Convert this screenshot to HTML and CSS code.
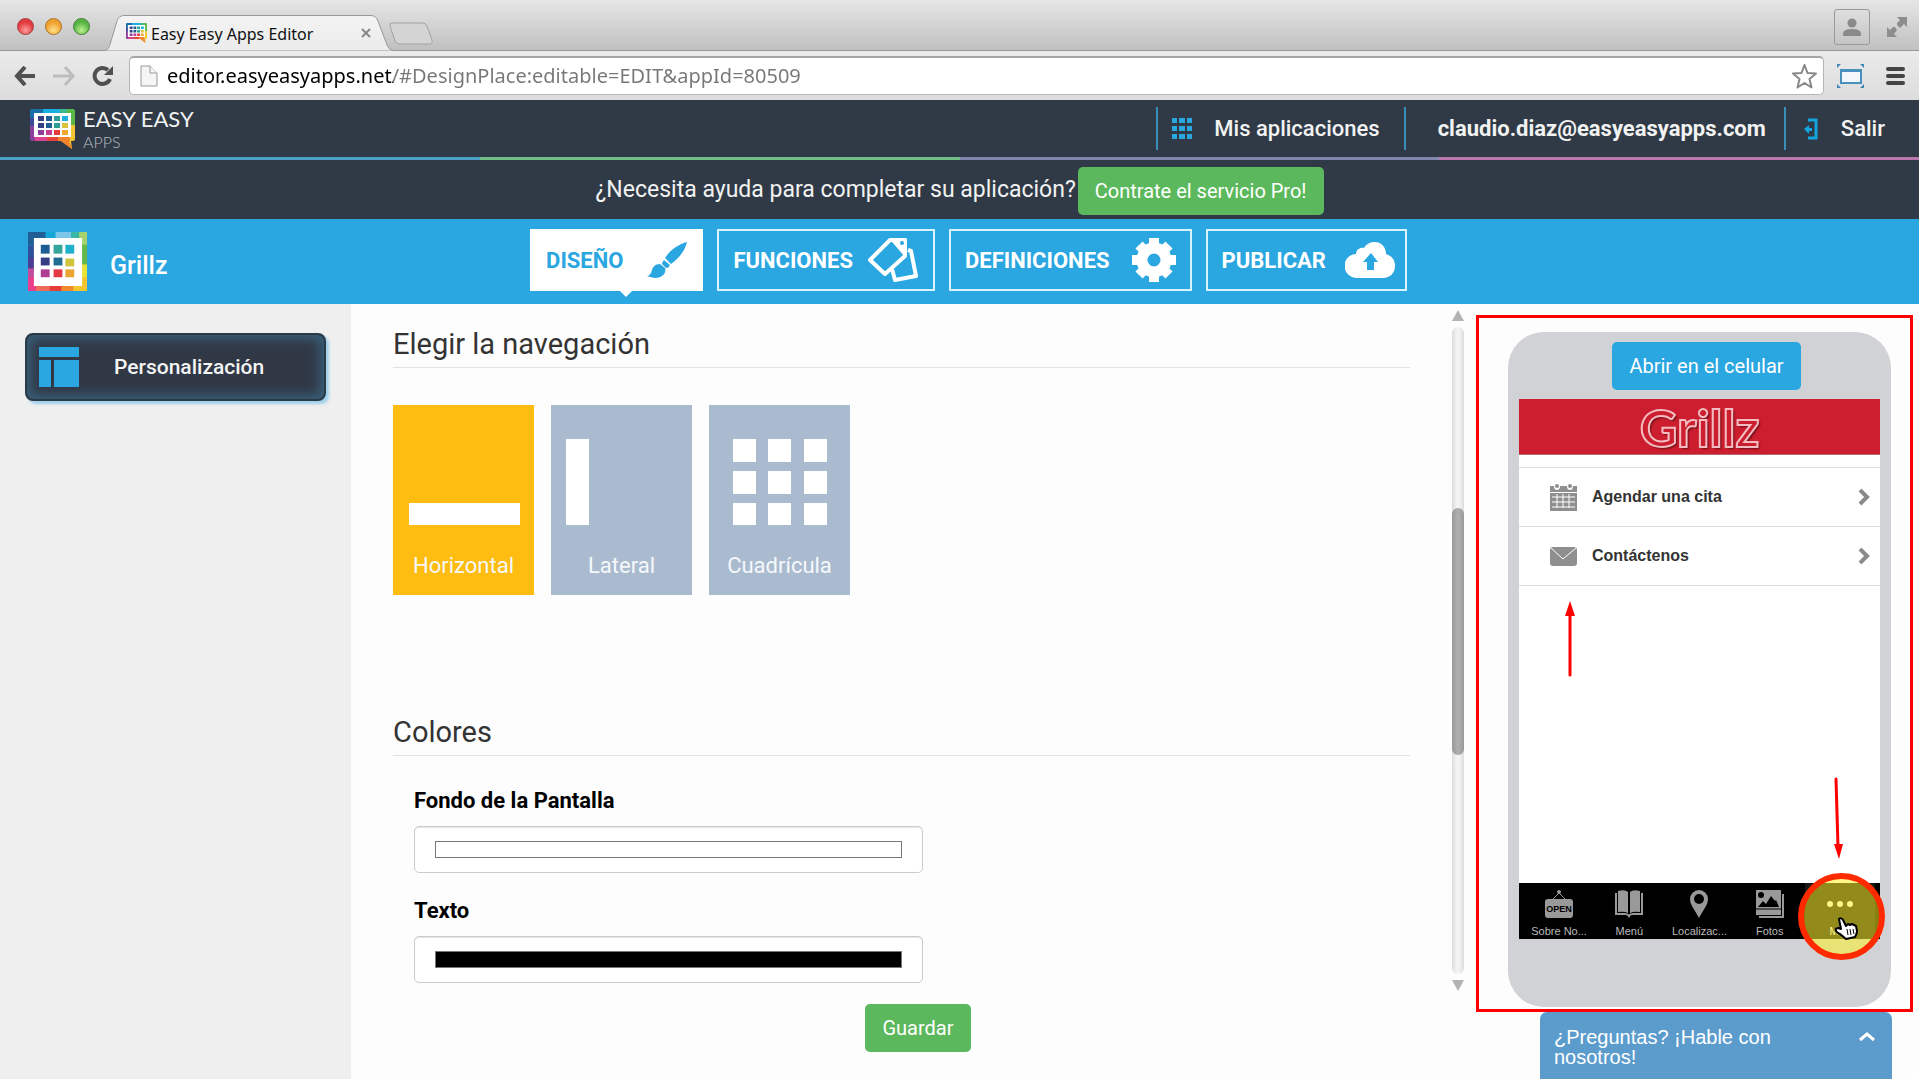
FILE: index.html
```html
<!DOCTYPE html>
<html lang="es">
<head>
<meta charset="utf-8">
<meta name="viewport" content="width=device-width, initial-scale=1">
<title>Easy Easy Apps Editor</title>
<link rel="stylesheet" href="styles.css">
</head>
<body>
<svg class="defs" aria-hidden="true">
  <defs>
    <linearGradient id="tabFill" x1="0" y1="0" x2="0" y2="1">
      <stop offset="0" stop-color="#f4f4f4"/><stop offset="1" stop-color="#ebebeb"/>
    </linearGradient>
    <symbol id="mosaic" viewBox="0 0 60 60" preserveAspectRatio="none">
      <path fill="#1f5f95" d="M0 0h18v14H0z"/><path fill="#17a6d8" d="M18 0h12v8H18z"/>
      <path fill="#7cc6ea" d="M28 0h16v8H28z"/><path fill="#3bb8a5" d="M44 0h8v12h-8z"/>
      <path fill="#a5d26c" d="M52 0h8v14h-8z"/><path fill="#2e4f9b" d="M0 14h8v14H0z"/>
      <path fill="#4a3d93" d="M0 26h8v12H0z"/><path fill="#c04a9b" d="M0 37h8v10H0z"/>
      <path fill="#e83e8c" d="M0 46h14v14H0z"/><path fill="#ef6a5a" d="M8 54h16v6H8z"/>
      <path fill="#e53c36" d="M22 53h14v7H22z"/><path fill="#f08a2c" d="M34 53h14v7H34z"/>
      <path fill="#f5c42e" d="M46 44h14v16H46z"/><path fill="#e8e337" d="M53 32h7v14h-7z"/>
      <path fill="#63b94a" d="M53 13h7v20h-7z"/><path fill="#fff" d="M6 6h49v49H6z"/>
      <path fill="#1c5d93" d="M13 13h9v9h-9z"/><path fill="#35a59a" d="M26 13h9v9h-9z"/>
      <path fill="#1fb1cc" d="M38 13h9v9h-9z"/><path fill="#353d84" d="M13 26h9v8h-9z"/>
      <path fill="#1e6e93" d="M26 26h9v8h-9z"/><path fill="#cfc43c" d="M38 27h9v8h-9z"/>
      <path fill="#b03c93" d="M13 38h9v8h-9z"/><path fill="#e33a44" d="M26 38h9v8h-9z"/>
      <path fill="#e8a52f" d="M38 38h9v8h-9z"/>
    </symbol>
    <symbol id="bubble" viewBox="0 0 45 40" preserveAspectRatio="none">
      <path fill="#1b6fa8" d="M0 2q0-2 2-2h14v12H0z"/><path fill="#18aee0" d="M13 0h18v8H13z"/>
      <path fill="#3fb78c" d="M30 0h8v12h-8z"/><path fill="#5bb848" d="M37 0h6q2 0 2 2v15h-8z"/>
      <path fill="#3c4a9b" d="M0 9h8v10H0z"/><path fill="#8a3f99" d="M0 17h8v13q0 2-2 2H2q-2 0-2-2z"/>
      <path fill="#d9438f" d="M5 25h14v7H5z"/><path fill="#e9423c" d="M17 25h12v7H17z"/>
      <path fill="#f0832c" d="M28 25h12v7H28z"/><path fill="#f3c52f" d="M38 16h7v14q0 2-2 2h-2l1 8-11-8h9z"/>
      <path fill="#f0832c" d="M31 32h8l3 8z"/><path fill="#fff" d="M4 4h37v24H4z"/>
      <path fill="#353f86" d="M8 7h6v5H8zM8 14h6v5H8z"/><path fill="#1f5f95" d="M16 7h6v5h-6zM16 14h6v5h-6z"/>
      <path fill="#2d9f98" d="M24 7h6v5h-6zM24 14h6v5h-6z"/><path fill="#1fb1dc" d="M32 7h6v5h-6z"/>
      <path fill="#d9c43c" d="M32 14h6v5h-6z"/><path fill="#8a3f99" d="M8 21h6v5H8z"/>
      <path fill="#c43c93" d="M16 21h6v5h-6z"/><path fill="#e33a3a" d="M24 21h6v5h-6z"/>
      <path fill="#f0a52f" d="M32 21h6v5h-6z"/>
    </symbol>
  </defs>
</svg>

<div class="browser">
  <div class="tabstrip">
    <div class="lights"><span class="light red"></span><span class="light amber"></span><span class="light green"></span></div>
    <div class="tab">
      <svg class="tab-shape" viewBox="0 0 290 36" aria-hidden="true"><path d="M0 35.500c4 0 5-3 6-6L13 6q2-5.500 7-5.500H267q5 0 7 5.500l9 24q2 5 6 5.500" fill="url(#tabFill)" stroke="#999"/></svg>
      <svg class="favicon" aria-hidden="true"><use href="#bubble"/></svg>
      <span class="tab-title">Easy Easy Apps Editor</span>
      <button class="bare tab-close" aria-label="Cerrar pestaña"><svg width="10" height="10" viewBox="0 0 10 10"><path d="M1 1l8 8M9 1L1 9" stroke="#888" stroke-width="2"/></svg></button>
    </div>
    <button class="bare new-tab" aria-label="Nueva pestaña"><svg width="46" height="24" viewBox="0 0 46 24"><path d="M4 1h30q4 0 5 3l5 14q1 4-3 4H12q-4 0-5-3L2 4q-1-3 2-3z" fill="#d4d4d4" stroke="#a2a2a2"/></svg></button>
    <button class="profile" aria-label="Perfil"><svg width="18" height="18" viewBox="0 0 18 18" fill="#8a8a8a"><circle cx="9" cy="5" r="4.500"/><path d="M0 18v-2q0-5 9-5t9 5v2z"/></svg></button>
    <button class="bare" aria-label="Pantalla completa"><svg width="20" height="20" viewBox="0 0 20 20" fill="#8d8d8d"><path d="M10 0h10v10l-3-3-4 4-3-3V6l3-3zM0 20V10l3 3 3-3 2 0 2 3-3 4 3 3z"/></svg></button>
  </div>
  <div class="toolbar">
    <button class="bare" aria-label="Atrás"><svg width="22" height="20" viewBox="0 0 22 20" fill="none" stroke="#505050" stroke-width="4"><path d="M2 10h19M11 1l-8 9 8 9"/></svg></button>
    <button class="bare" aria-label="Adelante"><svg width="22" height="20" viewBox="0 0 22 20" fill="none" stroke="#bdbdbd" stroke-width="3"><path d="M0 10h19M12 1l8 9-8 9"/></svg></button>
    <button class="bare" aria-label="Recargar"><svg width="22" height="22" viewBox="0 0 22 22"><path d="M18 14a8 8 0 1 1-2-9" fill="none" stroke="#505050" stroke-width="4"/><path d="M21 1v9h-9z" fill="#505050"/></svg></button>
    <div class="omnibox">
      <svg width="18" height="22" viewBox="0 0 18 22" fill="#f5f5f5" stroke="#999"><path d="M1 1h9l7 7v13H1z"/><path d="M10 1v7h7"/></svg>
      <input class="url" type="text" aria-label="Dirección" value="editor.easyeasyapps.net/#DesignPlace:editable=EDIT&amp;appId=80509">
      <button class="bare" aria-label="Favorito"><svg width="25" height="25" viewBox="0 0 25 25"><path d="M12.500 1l3 8 8.500.5-6.500 5.500 2 8.500-7-4.500-7 4.500 2-8.500L1 9.500 9.500 9z" fill="#fff" stroke="#888" stroke-width="2" stroke-linejoin="round"/></svg></button>
    </div>
    <button class="bare" aria-label="Captura"><svg width="27" height="24" viewBox="0 0 27 24"><path d="M4 6h20v13H4z" fill="#f3f6fa" stroke="#4a90bd" stroke-width="2"/><path d="M3 5h22v3H3z" fill="#4a90bd"/><path d="M0 0h4L0 4zM27 0v4l-4-4zM0 24v-4l4 4zM27 24h-4l4-4z" fill="#3f87b6"/></svg></button>
    <button class="bare menu" aria-label="Menú"><svg width="19" height="18" viewBox="0 0 19 18" fill="#444"><rect width="19" height="4" rx="2"/><rect y="7" width="19" height="4" rx="2"/><rect y="14" width="19" height="4" rx="2"/></svg></button>
  </div>
</div>

<header class="site-header">
  <a class="brand" href="#">
    <svg width="45" height="40" aria-hidden="true"><use href="#bubble"/></svg>
    <span class="brand-text"><span class="brand-main">EASY EASY</span><span class="brand-sub">APPS</span></span>
  </a>
  <nav class="account">
    <a href="#" class="account-link apps"><svg width="20" height="21" viewBox="0 0 20 21" fill="#2aa6e1"><path d="M0 0h5v5H0zM7 0h6v5H7zM15 0h5v5h-5zM0 8h5v5H0zM7 8h6v5H7zM15 8h5v5h-5zM0 16h5v5H0zM7 16h6v5H7zM15 16h5v5h-5z"/></svg>Mis aplicaciones</a>
    <a href="#" class="account-link user">claudio.diaz@easyeasyapps.com</a>
    <a href="#" class="account-link exit"><svg width="14" height="22" viewBox="0 0 14 22"><path d="M4 2h8v18H4" fill="none" stroke="#12a5df" stroke-width="3"/><path d="M0 11l5-4v3h3v3H5v3z" fill="#12a5df"/></svg>Salir</a>
  </nav>
</header>
<div class="rainbow"><span class="r-blue"></span><span class="r-green"></span><span class="r-violet"></span><span class="r-pink"></span></div>

<div class="promo"><span>¿Necesita ayuda para completar su aplicación?</span><button class="btn green-btn">Contrate el servicio Pro!</button></div>

<div class="app-nav">
  <div class="app-name">
    <svg width="59" height="59" aria-hidden="true"><use href="#mosaic"/></svg>
    <span>Grillz</span>
  </div>
  <nav class="steps">
    <a href="#" class="step active">DISEÑO<svg class="i-brush" width="40" height="36" viewBox="0 0 40 36" fill="#2aa6e1"><path d="M40 0c-8 2-17 8-22 16l6 6C32 16 38 9 40 0zM17 18c-1 1-2 3-2 4l4 4c2 0 3-1 4-3zM13 22c-5 0-7 3-8 6-1 4-3 6-5 6 5 2 11 3 15 0 3-2 4-5 3-8z"/></svg></a>
    <a href="#" class="step">FUNCIONES<svg class="i-tags" width="51" height="44" viewBox="0 0 51 44" fill="none" stroke="#fff" stroke-width="4" stroke-linejoin="round"><path d="M22 2L37 2v16L17 36 2 22z"/><path d="M25 2h12v14z" fill="#fff"/><circle cx="34" cy="5" r="2" fill="#2aa6e1" stroke="none"/><path d="M40 12l3 1 5 25-21 4-3-11"/></svg></a>
    <a href="#" class="step">DEFINICIONES<svg class="i-gear" width="44" height="44" viewBox="0 0 44 44" fill="none" stroke="#fff"><circle cx="22" cy="22" r="12" stroke-width="11"/><path d="M22 0v8M22 36v8M0 22h8M36 22h8M7 7l6 6M31 31l6 6M37 7l-6 6M13 31l-6 6" stroke-width="10"/></svg></a>
    <a href="#" class="step">PUBLICAR<svg class="i-cloud" width="50" height="36" viewBox="0 0 50 36"><path fill="#fff" d="M12 36A12 12 0 0 1 11 12C11 7 16 5 19 6 22 1 26 0 30 0c7 0 11 6 11 12 6 2 9 6 9 12 0 7-5 12-12 12z"/><path fill="#2aa6e1" d="M26 11l7 9h-4v8h-7v-8h-4z"/></svg></a>
  </nav>
</div>

<div class="workspace">
  <aside class="sidebar">
    <button class="side-item"><svg width="40" height="40" viewBox="0 0 40 40" fill="#2aa6e1"><path d="M0 0h40v10H0zM0 13h12v27H0zM15 13h25v27H15z"/></svg>Personalización</button>
  </aside>

  <main class="editor">
    <section>
      <h2>Elegir la navegación</h2>
      <div class="choices">
        <button class="choice selected"><svg width="141" height="190" viewBox="0 0 141 190" fill="#fff"><path d="M16 98h111v22H16z"/></svg><span>Horizontal</span></button>
        <button class="choice"><svg width="141" height="190" viewBox="0 0 141 190" fill="#fff"><path d="M15 34h23v86H15z"/></svg><span>Lateral</span></button>
        <button class="choice"><svg width="141" height="190" viewBox="0 0 141 190" fill="#fff"><path d="M24 34h23v23H24zM59 34h23v23H59zM95 34h23v23H95zM24 66h23v23H24zM59 66h23v23H59zM95 66h23v23H95zM24 98h23v22H24zM59 98h23v22H59zM95 98h23v22H95z"/></svg><span>Cuadrícula</span></button>
      </div>
    </section>
    <section>
      <h2>Colores</h2>
      <form class="colors">
        <label for="bg">Fondo de la Pantalla</label>
        <input type="color" id="bg" value="#ffffff">
        <label for="fg">Texto</label>
        <input type="color" id="fg" value="#000000">
      </form>
    </section>
    <div class="actions"><button class="btn green-btn save">Guardar</button></div>
  </main>

  <div class="scroller" aria-hidden="true">
    <span class="up"></span><div class="track"><div class="thumb"></div></div><span class="down"></span>
  </div>

  <aside class="preview">
    <div class="phone">
      <button class="btn blue-btn">Abrir en el celular</button>
      <div class="screen">
        <div class="phone-head">Grillz</div>
        <ul class="list">
          <li><a href="#"><svg width="27" height="27" viewBox="0 0 27 27" fill="#8f8f8f"><path d="M0 2h4q0 4 3 4t3-4h7q0 4 3 4t3-4h4v6H0z"/><circle cx="7" cy="2" r="2"/><circle cx="20" cy="2" r="2"/><path d="M0 9h27v18H0z"/><path d="M2 13h23M2 18h23M2 23h23M7 10v14M13 10v14M19 10v14" stroke="#fff"/></svg><span>Agendar una cita</span><svg width="12" height="18" viewBox="0 0 12 18"><path d="M2 2l7 7-7 7" fill="none" stroke="#8a8a8a" stroke-width="4"/></svg></a></li>
          <li><a href="#"><svg width="27" height="27" viewBox="0 0 27 27"><rect y="4" width="27" height="19" rx="3" fill="#8f8f8f"/><path d="M1 5l12 11L26 5" fill="none" stroke="#fff"/></svg><span>Contáctenos</span><svg width="12" height="18" viewBox="0 0 12 18"><path d="M2 2l7 7-7 7" fill="none" stroke="#8a8a8a" stroke-width="4"/></svg></a></li>
        </ul>
        <nav class="phone-tabs">
          <a href="#"><svg width="28" height="28" viewBox="0 0 28 28"><path d="M8 9l6-6 6 6" fill="none" stroke="#999"/><circle cx="14" cy="2" r="2" fill="#999"/><rect y="9" width="28" height="19" rx="3" fill="#999"/><text x="14" y="22" text-anchor="middle" class="open-sign">OPEN</text></svg>Sobre No...</a>
          <a href="#"><svg width="28" height="28" viewBox="0 0 28 28"><path d="M3 1q7-2 10 1v21q-4-2-10-1zM25 1q-7-2-10 1v21q4-2 10-1z" fill="#999"/><path d="M1 3v21h9q3 0 4 2 1-2 4-2h9V3" fill="none" stroke="#999" stroke-width="2"/></svg>Menú</a>
          <a href="#"><svg width="28" height="28" viewBox="0 0 28 28"><path d="M14 28C10 20 5 15 5 9a9 9 0 0 1 18 0c0 6-5 11-9 19zM14 4a5 5 0 1 0 0 10 5 5 0 0 0 0-10z" fill="#999" fill-rule="evenodd"/></svg>Localizac...</a>
          <a href="#"><svg width="28" height="28" viewBox="0 0 28 28"><path d="M0 0h25v25H0z" fill="#999"/><path d="M2 17l5-6 3 3 5-8 4 5 1-1 3 7z"/><circle cx="5" cy="5" r="3"/><path d="M0 19h25" stroke="#000"/><path d="M3 27h24V4" fill="none" stroke="#999" stroke-width="2"/></svg>Fotos</a>
          <a href="#" class="current"><svg width="28" height="28" viewBox="0 0 28 28" fill="#fff"><circle cx="4" cy="14" r="3"/><circle cx="14" cy="14" r="3"/><circle cx="24" cy="14" r="3"/></svg>Más</a>
        </nav>
      </div>
    </div>
    <svg class="mark arrow-up" width="10" height="76" viewBox="0 0 10 76"><path d="M5 74V10" stroke="#f00" stroke-width="3" stroke-linecap="round"/><path d="M5 0l5 15H0z" fill="#f00"/></svg>
    <svg class="mark arrow-down" width="12" height="82" viewBox="0 0 12 82"><path d="M4 2l2 68" stroke="#f00" stroke-width="3" stroke-linecap="round"/><path d="M7 82L2 67h9z" fill="#f00"/></svg>
    <div class="mark ring"></div>
    <svg class="mark hand" width="24" height="24" viewBox="0 0 24 24"><path d="M5 2c1-1 3-1 4 1l3 6 2-2 2 1 2-1 2 1 2 1 1 5c0 3-1 4-2 6l-9 2c-3-2-5-5-8-6-3-2-3-5 0-5l3 1z" fill="#fff" stroke="#000" stroke-width="2" stroke-linejoin="round"/><path d="M13 12l1 6M16 12l1 6M19 12l1 5" stroke="#000"/></svg>
  </aside>
</div>

<button class="chat"><span>¿Preguntas? ¡Hable con nosotros!</span><svg width="16" height="10" viewBox="0 0 16 10"><path d="M1 8l7-6 7 6" fill="none" stroke="#fff" stroke-width="3"/></svg></button>
</body>
</html>
```

FILE: styles.css
```css
* { box-sizing: border-box; }
body {
  margin: 0;
  min-height: 100vh;
  display: flex;
  flex-direction: column;
  background: #fdfdfd;
  font-family: Roboto, "Liberation Sans", sans-serif;
  font-size: 22px;
  color: #333;
}
a { color: inherit; text-decoration: none; }
button { font: inherit; cursor: pointer; }
svg { display: block; flex: none; }
.defs { position: absolute; width: 0; height: 0; }
.bare { border: 0; padding: 0; background: none; }

/* Browser frame */
.browser { font-family: "Noto Sans", "Open Sans", sans-serif; }
.tabstrip {
  height: 51px;
  display: flex;
  align-items: center;
  padding: 3px 12px 0 17px;
  background: linear-gradient(#e6e6e6, #c0c0c0);
  border-bottom: 1px solid #999;
}
.lights { display: flex; gap: 11px; }
.light { width: 17px; height: 17px; border-radius: 50%; border: 1px solid; }
.light.red { background: radial-gradient(circle at 50% 75%, #ff9c9c, #e23b3f 60%); border-color: #a8393c; }
.light.amber { background: radial-gradient(circle at 50% 75%, #ffe08a, #f0a02e 60%); border-color: #a87228; }
.light.green { background: radial-gradient(circle at 50% 75%, #bdf28c, #57b344 60%); border-color: #46803a; }
.tab {
  position: relative;
  align-self: flex-end;
  width: 290px;
  height: 35px;
  margin-left: 14px;
  padding: 0 23px 0 22px;
  display: flex;
  align-items: center;
  gap: 4px;
}
.tab > * { position: relative; }
.tab .tab-shape { position: absolute; left: 0; top: 0; width: 290px; height: 36px; }
.favicon { width: 21px; height: 20px; }
.tab-title { flex: 1; padding-top: 2px; font-size: 16px; color: #111; white-space: nowrap; }
.new-tab { align-self: flex-end; margin: 0 auto 4px -6px; }
.profile {
  width: 36px;
  height: 36px;
  display: grid;
  place-items: center;
  margin-right: 17px;
  padding: 0;
  border: 1px solid #999;
  border-radius: 3px;
  background: none;
}
.toolbar {
  height: 49px;
  display: flex;
  align-items: center;
  gap: 17px;
  padding: 0 14px;
  background: linear-gradient(#ebebeb, #dcdcdc);
}
.omnibox {
  flex: 1;
  height: 39px;
  display: flex;
  align-items: center;
  gap: 9px;
  margin: 0 -4px 0 -2px;
  padding: 0 6px 0 10px;
  background: #fff;
  border: 1px solid #b5b5b5;
  border-top: 2px solid #a5a5a5;
  border-radius: 5px;
}
.menu { margin-left: 5px; }
.url {
  flex: 1;
  min-width: 0;
  height: 30px;
  border: 0;
  padding: 0 0 2px;
  font: 20px "Noto Sans", "Open Sans", sans-serif;
  color: #000;
  background: linear-gradient(90deg, #000 226px, #777 226px);
  background-clip: text;
  -webkit-text-fill-color: transparent;
}

/* Site header */
.site-header {
  height: 57px;
  display: flex;
  align-items: center;
  justify-content: space-between;
  padding: 0 34px 0 30px;
  background: #2f3a46;
  color: #f2f2f2;
}
.brand { display: flex; align-items: center; gap: 8px; font-family: Lato, sans-serif; }
.brand-text { display: flex; flex-direction: column; }
.brand-main { font-size: 22px; line-height: 27px; }
.brand-sub { font-size: 16px; line-height: 20px; font-weight: 300; color: #b5bac0; }
.account { display: flex; }
.account-link {
  display: flex;
  align-items: center;
  height: 43px;
  border-left: 2px solid #3a8fb8;
  font-weight: 500;
}
.apps { padding: 0 24px 0 14px; gap: 22px; }
.user { padding: 0 18px 0 32px; font-weight: 700; }
.exit { padding-left: 18px; gap: 23px; }
.rainbow { display: grid; grid-template-columns: repeat(4, 1fr); height: 3px; }
.r-blue { background: #4b9fc4; }
.r-green { background: #71bd86; }
.r-violet { background: #8285ad; }
.r-pink { background: #b978ae; }

.promo {
  height: 59px;
  display: flex;
  align-items: center;
  justify-content: center;
  gap: 2px;
  padding-top: 3px;
  background: #2f3a46;
  color: #f2f2f2;
}
.promo span { padding-bottom: 4px; font-size: 23px; }
.btn {
  height: 48px;
  padding: 0 17px;
  border: 0;
  border-radius: 5px;
  font-size: 20px;
  color: #fff;
}
.green-btn { background: #5cb85c; }
.blue-btn { background: #2aa6e1; }

/* App navigation */
.app-nav {
  height: 85px;
  display: flex;
  align-items: center;
  background: #2aa6e1;
  color: #fff;
}
.app-nav::after { content: ""; flex: 1 1 10px; }
.app-name {
  flex: 1;
  display: flex;
  align-items: center;
  gap: 23px;
  padding-left: 28px;
  font-size: 25px;
  font-weight: 500;
}
.app-name span { padding-top: 8px; }
.steps { display: flex; gap: 14px; padding-bottom: 3px; }
.step {
  position: relative;
  display: flex;
  align-items: center;
  height: 62px;
  padding: 0 14px;
  border: 2px solid #d8f3ff;
  font-weight: 700;
}
.step.active { background: #fff; color: #2aa6e1; border-color: #fff; }
.step.active::after {
  content: "";
  position: absolute;
  left: 88px;
  top: 60px;
  border: 6px solid transparent;
  border-top-color: #fff;
  border-bottom: 0;
}
.i-brush { margin-left: 24px; }
.i-tags { margin-left: 15px; }
.i-gear { margin-left: 22px; }
.i-cloud { margin: 0 -4px 0 19px; }

/* Workspace */
.workspace { flex: 1; display: flex; }
.sidebar { width: 351px; padding: 29px 25px; background: #efefef; }
.side-item {
  width: 100%;
  height: 68px;
  display: flex;
  align-items: center;
  gap: 35px;
  padding: 0 12px;
  border: 2px solid #2b3a48;
  border-radius: 8px;
  background: #303846;
  box-shadow: inset 0 0 12px 4px #39607a, 3px 3px 3px #9fd0ea;
  color: #f4f4f4;
  font-size: 21px;
  font-weight: 500;
}
.editor { flex: 1; min-width: 0; padding: 21px 42px 0; }
h2 {
  margin: 0;
  padding-bottom: 4px;
  border-bottom: 1px solid #e3e3e3;
  font-size: 29px;
  line-height: 38px;
  font-weight: 400;
}
.choices { display: flex; gap: 17px; margin: 37px 0 118px; }
.choice {
  width: 141px;
  height: 190px;
  display: grid;
  padding: 0;
  border: 0;
  background: #abbbcf;
  color: #f5f8fb;
}
.choice > * { grid-area: 1 / 1; }
.choice span { align-self: end; padding-bottom: 17px; }
.choice.selected { background: #ffbc11; }
.colors { width: 50%; margin: 31px 21px 0; display: flex; flex-direction: column; }
.colors label { margin-bottom: 11px; line-height: 28px; font-weight: 700; color: #000; }
.colors input {
  width: 100%;
  height: 47px;
  margin: 0 0 24px;
  padding: 14px 20px;
  border: 1px solid #ccc;
  border-radius: 5px;
  background: #fff;
  box-shadow: inset 0 1px 1px #e4e4e4;
}
.colors input:last-child { margin-bottom: 21px; }
.colors input::-webkit-color-swatch-wrapper { padding: 0; }
.colors input::-webkit-color-swatch { border: 1px solid #777; border-radius: 0; }
.actions { display: flex; justify-content: center; padding-left: 33px; }

.scroller {
  width: 12px;
  margin: 6px 12px 0 0;
  display: flex;
  flex-direction: column;
  gap: 6px;
}
.up, .down { border: 6px solid transparent; border-top-width: 0; border-bottom: 11px solid #b3b3b3; }
.down { border-top: 11px solid #b3b3b3; border-bottom-width: 0; }
.track { height: 647px; padding-top: 181px; border-radius: 6px; background: linear-gradient(90deg, #dcdcdc, #f3f3f3 40%, #f3f3f3 60%, #dcdcdc); }
.thumb { height: 247px; border-radius: 6px; background: linear-gradient(90deg, #999, #b0b0b0 50%, #999); }

/* Phone preview */
.preview {
  position: relative;
  align-self: flex-start;
  width: 437px;
  margin: 11px 6px 0 0;
  padding: 14px 19px 2px 29px;
  border: 3px solid #f00;
}
.phone {
  display: flex;
  flex-direction: column;
  align-items: center;
  padding: 10px 11px 68px;
  border-radius: 36px;
  background: #d1d2d5;
}
.blue-btn { margin: 0 0 9px 14px; }
.screen { width: 100%; height: 540px; display: flex; flex-direction: column; background: #fff; font-family: "Liberation Sans", sans-serif; }
.phone-head {
  height: 56px;
  border-bottom: 1px solid #b06a70;
  background: #cc1e2e;
  color: #cc1e2e;
  font-family: Lato, sans-serif;
  font-size: 52px;
  line-height: 56px;
  font-weight: 700;
  text-align: center;
  -webkit-text-stroke: 2px #f3bcc1;
  text-shadow: 2px 2px 2px #701018;
}
.list { flex: 1; margin: 12px 0 0; padding: 0; list-style: none; }
.list li { border-bottom: 1px solid #ddd; }
.list li:first-child { border-top: 1px solid #ddd; }
.list a { display: flex; align-items: center; gap: 15px; height: 58px; padding: 0 10px 0 31px; font-size: 16px; font-weight: 700; }
.list span { flex: 1; }
.phone-tabs { display: grid; grid-template-columns: repeat(5, 1fr); height: 56px; padding: 0 5px; background: #000; }
.phone-tabs a { display: flex; flex-direction: column; align-items: center; gap: 6px; padding-top: 7px; font-size: 11px; line-height: 14px; color: #bbb; }
.phone-tabs .current { color: #fff; background: #181818; }
.open-sign { font: 700 9px "Liberation Sans", sans-serif; fill: #000; }

/* Marks drawn over the preview */
.mark { position: absolute; }
.arrow-up { left: 86px; top: 283px; }
.arrow-down { left: 353px; top: 459px; }
.ring { left: 319px; top: 555px; width: 87px; height: 87px; border: 6px solid #ff2a00; border-radius: 50%; background: rgba(255, 240, 30, .53); }
.hand { left: 355px; top: 599px; }

.chat {
  position: fixed;
  right: 27px;
  bottom: 0;
  width: 352px;
  height: 67px;
  display: flex;
  justify-content: space-between;
  align-items: flex-start;
  padding: 15px 17px 0 14px;
  border: 0;
  border-radius: 7px 7px 0 0;
  background: #5b9ccd;
  color: #fff;
  font: 20px/20px "Liberation Sans", sans-serif;
  text-align: left;
}
.chat span { width: 230px; }
.chat svg { margin-top: 5px; }
```
